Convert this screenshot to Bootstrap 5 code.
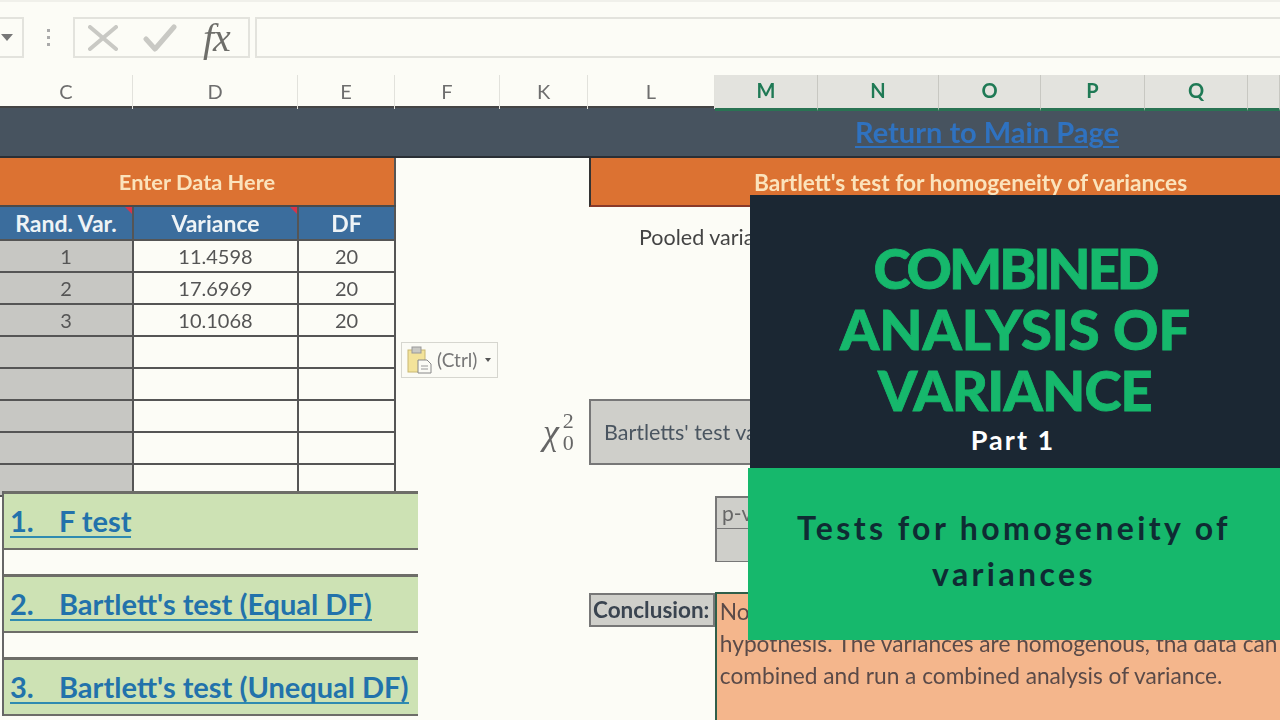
<!DOCTYPE html>
<html lang="en">
<head>
  <meta charset="UTF-8" />
  <meta name="viewport" content="width=device-width, initial-scale=1" />
  <title>Combined Analysis of Variance - Part 1</title>
  <link href="https://cdn.jsdelivr.net/npm/bootstrap@5.3.0/dist/css/bootstrap.min.css" rel="stylesheet" />
  <style>
    body {
      width: 1280px;
      height: 720px;
      overflow: hidden;
      background-color: #fcfcf6;
      font-family: "Lato", "Liberation Sans", sans-serif;
    }
    .stage { width: 1280px; height: 720px; overflow: hidden; }
    .sheet { width: 1280px; height: 720px; overflow: hidden; filter: blur(0.5px); }

    /* formula bar */
    .formula-bar { height: 75px; padding-top: 15px; border-top: 2px solid #f0f0ea; }
    .name-box { width: 24px; height: 41px; border: 2px solid #e3e3dd; border-left: 0; }
    .name-caret { width: 0; height: 0; border-left: 6px solid transparent; border-right: 6px solid transparent; border-top: 7px solid #777; margin-left: 1px; }
    .grip { width: 49px; }
    .grip-dot { width: 3px; height: 3px; background: #aaa; }
    .fx-box { width: 177px; height: 41px; border: 2px solid #e3e3dd; }
    .x-icon { margin-left: 13px; }
    .check-icon { margin-left: 25px; }
    .fx-label { margin-left: 26px; font: italic 40px/40px "Liberation Serif", serif; color: #6e6e6a; letter-spacing: -1px; }
    .formula-input { height: 41px; border: 2px solid #e3e3dd; border-right: 0; margin-left: 5px; }

    /* column letters */
    .col-letters { display: grid; grid-template-columns: 133px 165px 97px 105px 88px 127px 103px 121px 102px 104px 103px 32px; height: 33px; border-bottom: 2px solid #444; }
    .col-letter { font-size: 20px; color: #6e6e6e; border-right: 1px solid #e2e2dc; padding-bottom: 3px; }
    .col-letter-on { background: #e3e3de; color: #1f7a55; font-weight: 700; border-right-color: #c8c8c2; margin-bottom: -2px; border-bottom: 3px solid #2a7353; }

    .dark-band { height: 50px; background: #47535f; border-bottom: 2px solid #2a2f35; }
    .main-link { margin-left: 855px; font-size: 29px; font-weight: 700; color: #2f72c0; text-decoration-thickness: 2px; text-underline-offset: 3px; }

    /* left data table */
    .left-side { width: 395px; }
    .data-grid { width: 395px; table-layout: fixed; border-collapse: collapse; }
    .data-grid td, .data-grid th { height: 32px; padding: 0; text-align: center; font-size: 20px; color: #555; border-bottom: 2px solid #555; border-right: 2px solid #555; }
    .data-grid .enter-head { height: 48px; padding-top: 1px; background: #dc7232; color: #fbe3bc; font-size: 21.8px; font-weight: 700; border-bottom: 2px solid #4a4a4a; }
    .data-grid .blue-head { height: 34px; background: #3b6d9d; color: #eef3f6; font-size: 23px; line-height: 24px; font-weight: 700; position: relative; }
    .data-grid .flagged::after { content: ""; position: absolute; top: 0; right: 0; border-top: 7px solid #d8344a; border-left: 7px solid transparent; }
    .data-grid .rand-cell { background: #c7c7c3; }

    /* right side */
    .right-side { width: 885px; }
    .bartlett-head { margin-left: 194px; height: 49px; background: #dc7232; color: #fbe3bc; font-size: 22.7px; font-weight: 700; border-left: 2px solid #333; border-bottom: 2px solid #8a3a2a; padding: 3px 0 0 163px; white-space: nowrap; }
    .pooled-line { margin-left: 244px; margin-top: 18px; font-size: 21.5px; color: #444; height: 32px; line-height: 24px; white-space: nowrap; }
    .chi-row { margin-left: 148px; margin-top: 142px; height: 66px; }
    .chi-sym { width: 46px; font: italic 36px/1 "Liberation Serif", serif; color: #666; }
    .chi-scripts { margin-left: 4px; font: 22px/22px "Liberation Serif", serif; color: #666; }
    .gray-box { background: #cfcfca; border: 2px solid #777; color: #4a5560; font-size: 21.5px; }
    .bartlett-box { width: 300px; height: 66px; padding-left: 13px; white-space: nowrap; }
    .pv-stack { margin-left: 320px; margin-top: 31px; width: 200px; }
    .pv-cell { height: 33px; padding-left: 5px; font-size: 21px; color: #666; border-bottom-width: 1px; }
    .end-row { margin-left: 194px; margin-top: 30px; }
    .end-label { width: 126px; height: 34px; margin-top: 1px; font-size: 22.5px; font-weight: 700; color: #3a4450; padding-left: 2px; white-space: nowrap; }
    .end-text { width: 566px; height: 135px; background: #f4b68c; border-left: 2px solid #2f5f4a; border-top: 2px solid #2f5f4a; padding: 2px 0 0 3px; font-size: 22.7px; line-height: 32px; color: #5a4a48; white-space: nowrap; overflow: hidden; }

    /* paste tag and links panel lie over the sheet */
    .paste-tag { position: absolute; left: 401px; top: 342px; width: 97px; height: 36px; background: #fbfbf5; border: 1px solid #d6d6cf; font-size: 19px; color: #777; padding-left: 5px; }
    .paste-caret { width: 0; height: 0; border-left: 3px solid transparent; border-right: 3px solid transparent; border-top: 4px solid #555; }
    .links-panel { position: absolute; left: 2px; top: 491px; width: 416px; background: #fcfcf6; border-left: 2px solid #666; }
    .link-row { height: 59px; background: #cde2b4; border-top: 3px solid #6d6d68; border-bottom: 2px solid #6d6d68; padding: 1px 0 0 6px; }
    .link-gap { height: 24px; }
    .test-link { font-size: 29px; font-weight: 700; line-height: 31px; color: #2272ab; text-decoration: none; border-bottom: 2px solid #2f8bb0; white-space: nowrap; }
    .test-num { width: 49px; }

    /* title card */
    .title-card { position: absolute; left: 748px; top: 195px; width: 532px; }
    .title-top { height: 273px; margin-left: 2px; background: #1b2733; padding-top: 42px; }
    .title-main { font-size: 56px; font-weight: 900; line-height: 61px; color: #16b86c; text-align: center; margin: 0; -webkit-text-stroke: 0.8px #16b86c; }
    .title-combined { letter-spacing: -3px; }
    .title-variance { letter-spacing: -0.8px; }
    .title-part { font-size: 27px; font-weight: 700; letter-spacing: 2px; line-height: 40px; color: #fff; text-align: center; margin-left: -4px; }
    .title-bottom { height: 172px; background: #16b86c; padding-top: 37px; }
    .title-sub { font-size: 32px; font-weight: 700; letter-spacing: 3.4px; line-height: 46px; color: #0f2b33; text-align: center; margin: 0; }
  </style>
</head>
<body>
  <div class="stage position-relative">
    <div class="sheet position-relative">
      <!-- formula bar -->
      <div class="formula-bar d-flex align-items-start">
        <div class="name-box d-flex align-items-center"><span class="name-caret"></span></div>
        <div class="grip d-flex flex-column align-items-center gap-1 pt-2 mt-1">
          <span class="grip-dot"></span><span class="grip-dot"></span><span class="grip-dot"></span>
        </div>
        <div class="fx-box d-flex align-items-center">
          <svg width="30" height="26" viewBox="0 0 30 26" class="x-icon flex-shrink-0" fill="none" stroke="#c9c9c4" stroke-width="4" stroke-linecap="round">
            <path d="M2 2 L28 24 M28 2 L2 24"/>
          </svg>
          <svg width="34" height="28" viewBox="0 0 34 28" class="check-icon flex-shrink-0" fill="none" stroke="#c9c9c4" stroke-width="5" stroke-linecap="round" stroke-linejoin="round">
            <path d="M3 15 L12 25 L31 3"/>
          </svg>
          <span class="fx-label">fx</span>
        </div>
        <div class="formula-input flex-grow-1"></div>
      </div>

      <!-- column letters -->
      <div class="col-letters">
        <div class="col-letter d-flex align-items-center justify-content-center">C</div>
        <div class="col-letter d-flex align-items-center justify-content-center">D</div>
        <div class="col-letter d-flex align-items-center justify-content-center">E</div>
        <div class="col-letter d-flex align-items-center justify-content-center">F</div>
        <div class="col-letter d-flex align-items-center justify-content-center">K</div>
        <div class="col-letter d-flex align-items-center justify-content-center">L</div>
        <div class="col-letter col-letter-on d-flex align-items-center justify-content-center">M</div>
        <div class="col-letter col-letter-on d-flex align-items-center justify-content-center">N</div>
        <div class="col-letter col-letter-on d-flex align-items-center justify-content-center">O</div>
        <div class="col-letter col-letter-on d-flex align-items-center justify-content-center">P</div>
        <div class="col-letter col-letter-on d-flex align-items-center justify-content-center">Q</div>
        <div class="col-letter col-letter-on"></div>
      </div>

      <div class="dark-band d-flex align-items-center">
        <a href="#" class="main-link">Return to Main Page</a>
      </div>

      <div class="d-flex">
        <div class="left-side flex-shrink-0">
          <table class="data-grid">
            <colgroup><col style="width:133px"><col style="width:165px"><col style="width:97px"></colgroup>
            <tr><td colspan="3" class="enter-head">Enter Data Here</td></tr>
            <tr>
              <th class="blue-head flagged">Rand. Var.</th>
              <th class="blue-head flagged">Variance</th>
              <th class="blue-head">DF</th>
            </tr>
            <tr><td class="rand-cell">1</td><td>11.4598</td><td>20</td></tr>
            <tr><td class="rand-cell">2</td><td>17.6969</td><td>20</td></tr>
            <tr><td class="rand-cell">3</td><td>10.1068</td><td>20</td></tr>
            <tr><td class="rand-cell"></td><td></td><td></td></tr>
            <tr><td class="rand-cell"></td><td></td><td></td></tr>
            <tr><td class="rand-cell"></td><td></td><td></td></tr>
            <tr><td class="rand-cell"></td><td></td><td></td></tr>
            <tr><td class="rand-cell"></td><td></td><td></td></tr>
          </table>
        </div>

        <div class="right-side flex-shrink-0">
          <div class="bartlett-head d-flex align-items-center">Bartlett's test for homogeneity of variances</div>
          <div class="pooled-line">Pooled variance</div>
          <div class="chi-row d-flex align-items-center">
            <div class="chi-sym d-flex align-items-center">
              <span>χ</span>
              <span class="chi-scripts d-flex flex-column"><span>2</span><span>0</span></span>
            </div>
            <div class="gray-box bartlett-box d-flex align-items-center">Bartletts' test value</div>
          </div>
          <div class="pv-stack">
            <div class="gray-box pv-cell d-flex align-items-center">p-value</div>
            <div class="gray-box pv-cell border-top-0"></div>
          </div>
          <div class="end-row d-flex align-items-start">
            <div class="gray-box end-label d-flex align-items-center">Conclusion:</div>
            <div class="end-text">
              No reason to reject the null<br>
              hypothesis. The variances are homogenous, tha data can<br>
              combined and run a combined analysis of variance.
            </div>
          </div>
        </div>
      </div>

      <div class="paste-tag d-flex align-items-center gap-1">
        <svg width="26" height="28" viewBox="0 0 26 28" class="flex-shrink-0" fill="none">
          <rect x="1" y="4" width="17" height="22" fill="#f3e39a" stroke="#c9b872"/>
          <rect x="5" y="1" width="9" height="6" fill="#c9c9c4" stroke="#999"/>
          <path d="M11 14 H20 L24 18 V27 H11 Z" fill="#fbfbf5" stroke="#888"/>
          <path d="M14 20 H21 M14 23 H21" stroke="#999"/>
        </svg>
        <span>(Ctrl)</span>
        <span class="paste-caret ms-1"></span>
      </div>

      <div class="links-panel">
        <div class="link-row d-flex align-items-center">
          <a href="#" class="test-link d-inline-flex"><span class="test-num">1.</span><span>F test</span></a>
        </div>
        <div class="link-gap"></div>
        <div class="link-row d-flex align-items-center">
          <a href="#" class="test-link d-inline-flex"><span class="test-num">2.</span><span>Bartlett's test (Equal DF)</span></a>
        </div>
        <div class="link-gap"></div>
        <div class="link-row d-flex align-items-center">
          <a href="#" class="test-link d-inline-flex"><span class="test-num">3.</span><span>Bartlett's test (Unequal DF)</span></a>
        </div>
      </div>
    </div>

    <!-- title card -->
    <div class="title-card">
      <div class="title-top">
        <h1 class="title-main"><span class="title-combined">COMBINED</span><br>ANALYSIS OF<br><span class="title-variance">VARIANCE</span></h1>
        <div class="title-part">Part 1</div>
      </div>
      <div class="title-bottom">
        <h2 class="title-sub">Tests for homogeneity of<br>variances</h2>
      </div>
    </div>
  </div>
  <script src="https://cdn.jsdelivr.net/npm/bootstrap@5.3.0/dist/js/bootstrap.bundle.min.js"></script>
</body>
</html>
